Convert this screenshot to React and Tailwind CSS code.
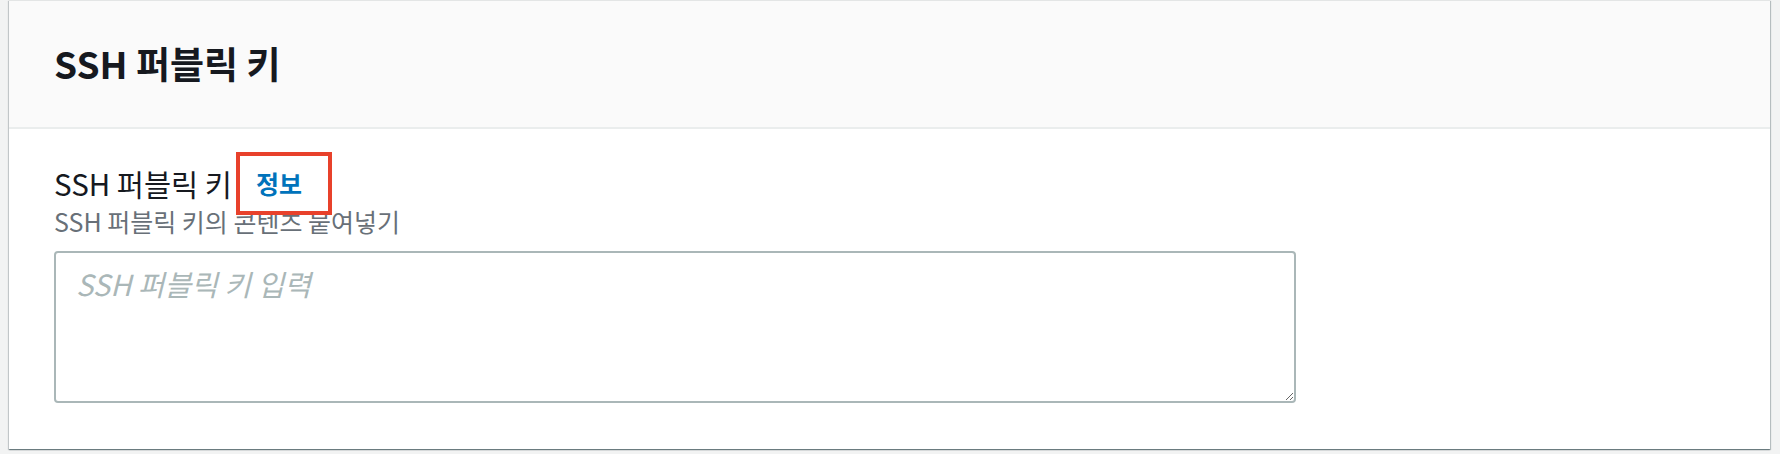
import React from "react";

const App = () => {
  return (
    <div
      className="h-[454px] w-full bg-[#f2f3f3] pl-[9px] pr-[10px]"
      style={{ fontFamily: '"Noto Sans CJK KR", "Noto Sans", sans-serif' }}
    >
      <div className="h-[449px] bg-white border-t border-[#e3e5e5] shadow-[0_1px_1px_0_rgba(0,28,36,0.35),1px_1px_1px_0_rgba(0,28,36,0.2),-1px_1px_1px_0_rgba(0,28,36,0.15)]">
        {/* header */}
        <div className="h-[128px] flex items-center bg-[#fafafa] border-b-2 border-[#eaeded] px-[45px]">
          <h2 className="text-[37px] font-bold text-[#16191f] leading-none pb-[2px]">
            SSH 퍼블릭 키
          </h2>
        </div>

        {/* body */}
        <div className="px-[45px] pt-[34px]">
          <div className="flex items-center text-[29.5px] leading-[40px] text-[#16191f]">
            <span>SSH 퍼블릭 키</span>
            <span className="relative ml-[24px] text-[25px] font-bold text-[#0073bb]">
              정보
              <span className="absolute -left-[20px] -right-[30px] -top-[11px] -bottom-[12px] border-4 border-[#e8412b]" />
            </span>
          </div>
          <div className="text-[25px] leading-[36px] text-[#687078]">
            SSH 퍼블릭 키의 콘텐츠 붙여넣기
          </div>
          <textarea
            className="mt-[12px] block w-[1242px] h-[152px] border-2 border-[#aab7b8] rounded-[4px] px-[20px] py-[10px] text-[29px] leading-[40px] text-[#16191f] italic placeholder:text-[#aab7b8] outline-none"
            placeholder="SSH 퍼블릭 키 입력"
          />
        </div>
      </div>
    </div>
  );
};

export default App;
